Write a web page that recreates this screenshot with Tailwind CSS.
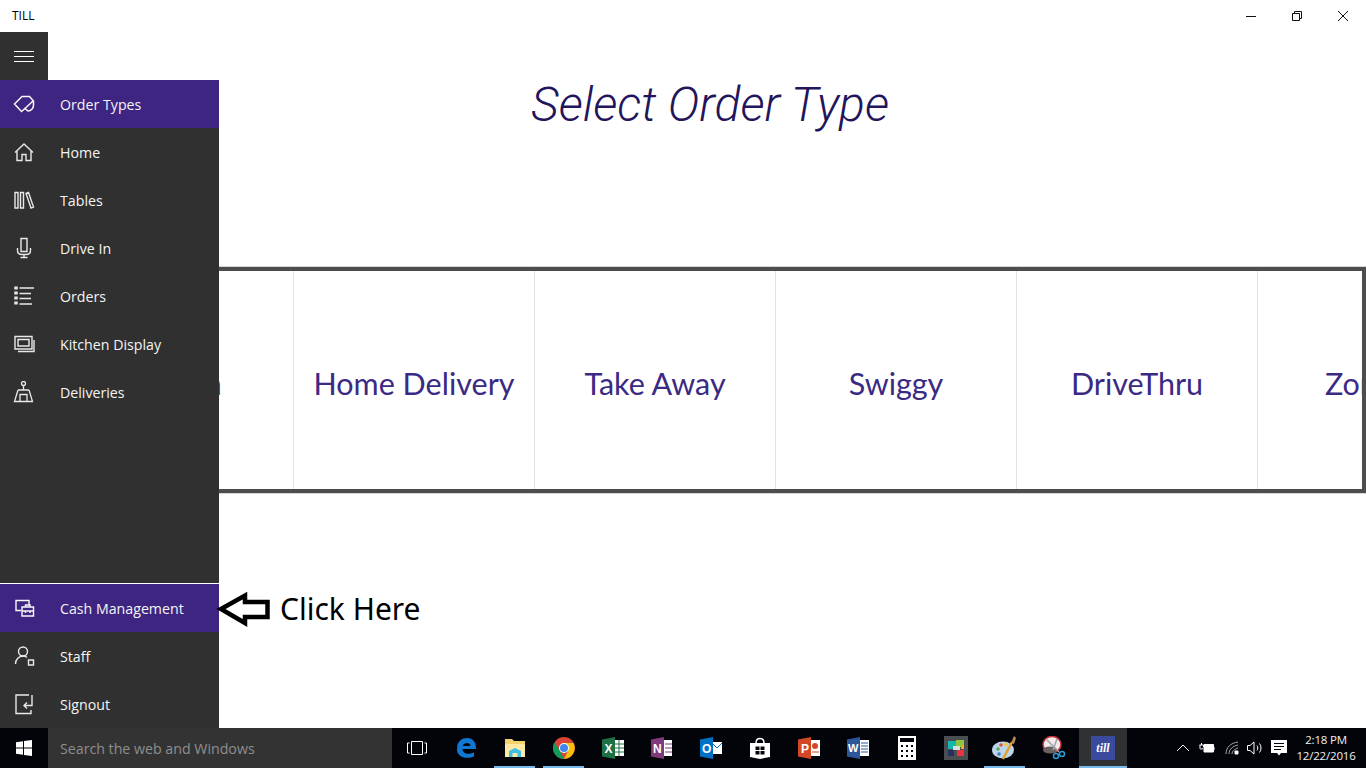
<!doctype html>
<html><head><meta charset="utf-8"><script src="https://cdn.jsdelivr.net/npm/@tailwindcss/browser@4"></script></head>
<body class="m-0 bg-white">
<div class="relative flex flex-col w-[1366px] h-[768px] overflow-hidden bg-white font-['Open_Sans',sans-serif]">
  <!-- title bar -->
  <div class="flex h-8 shrink-0 items-center justify-between">
    <span class="pl-3 text-[12px] text-black">TILL</span>
    <div class="flex">
      <div class="w-[46px] h-8 flex items-center justify-center"><svg width="12" height="12" viewBox="0 0 12 12"><path d="M1 6.5H11" stroke="#111" fill="none"/></svg></div>
      <div class="w-[46px] h-8 flex items-center justify-center"><svg width="12" height="12" viewBox="0 0 12 12" fill="none" stroke="#111"><path d="M1.5 3.5H8.5V10.5H1.5ZM3.5 3.5V1.5H10.5V8.5H8.5"/></svg></div>
      <div class="w-[46px] h-8 flex items-center justify-center"><svg width="12" height="12" viewBox="0 0 12 12" fill="none" stroke="#111"><path d="M1 1L11 11M11 1L1 11"/></svg></div>
    </div>
  </div>
  <!-- main -->
  <div class="relative flex-1 min-h-0">
    <div class="pl-12 flex flex-col">
      <div class="h-[145px] pl-[6px] flex items-center justify-center">
        <h1 class="font-['Roboto',sans-serif] italic font-light text-[48px] leading-none text-[#23155c]">Select Order Type</h1>
      </div>
      <div class="mt-[90px] h-[226px] border-4 border-[#4d4d4d] ring-1 ring-[#d4d4d4] flex overflow-hidden font-['Lato',sans-serif] text-[30.5px] text-[#3b2a84]">
        <div class="w-[242px] pl-[2px] pt-2 shrink-0 border-r border-[#e2e2e2] flex items-center justify-center">Dine In</div>
        <div class="w-[241px] pt-2 shrink-0 border-r border-[#e2e2e2] flex items-center justify-center">Home Delivery</div>
        <div class="w-[241px] pt-2 shrink-0 border-r border-[#e2e2e2] flex items-center justify-center">Take Away</div>
        <div class="w-[241px] pt-2 shrink-0 border-r border-[#e2e2e2] flex items-center justify-center">Swiggy</div>
        <div class="w-[241px] pt-2 shrink-0 border-r border-[#e2e2e2] flex items-center justify-center">DriveThru</div>
        <div class="w-[241px] pt-2 pr-1 shrink-0 flex items-center justify-center">Zomato</div>
      </div>
    </div>
    <!-- nav pane -->
    <div class="absolute left-0 top-0 bottom-0 w-[219px] flex flex-col text-[14.2px] text-[#f4f4f4]">
      <div class="w-12 h-12 shrink-0 bg-[#303030] flex items-center justify-center">
        <svg class="mt-[2px]" width="20" height="12" viewBox="0 0 20 12" stroke="#fff" fill="none"><path d="M0 .5H20M0 5.5H20M0 10.5H20"/></svg>
      </div>
      <div class="flex-1 bg-[#303030] flex flex-col border-b border-white">
        <a class="flex h-12 items-center bg-[#3d2581]"><span class="w-12 flex justify-center"><svg width="22" height="22" viewBox="0 0 22 22" fill="none" stroke="#f8f8f8" stroke-width="1.5"><path d="M1.500 11L9 3.500H16.500L20.500 8V12C20.500 15.500 18 18 15 18L12 15.500L8.500 18.500Z"/><path d="M12 15.500L20 8"/></svg></span><span class="ml-3 pt-[2px]">Order Types</span></a>
        <a class="flex h-12 items-center"><span class="w-12 flex justify-center"><svg width="22" height="22" viewBox="0 0 22 22" fill="none" stroke="#e8e8e8" stroke-width="1.4"><path d="M2 11.500L11 3L20 11.500M4 9.500V19.500H9V13.500H13V19.500H18V9.500"/></svg></span><span class="ml-3 pt-[2px]">Home</span></a>
        <a class="flex h-12 items-center"><span class="w-12 flex justify-center"><svg width="22" height="22" viewBox="0 0 22 22" fill="none" stroke="#e8e8e8" stroke-width="1.4"><path d="M2 3.500H5V19H2ZM7.500 3.500H10.500V19H7.500ZM13 4.500L15.500 3.500L20.500 18L18 19Z"/></svg></span><span class="ml-3 pt-[2px]">Tables</span></a>
        <a class="flex h-12 items-center"><span class="w-12 flex justify-center"><svg width="22" height="22" viewBox="0 0 22 22" fill="none" stroke="#e8e8e8" stroke-width="1.4"><path d="M8 1.500H14V14.500H8ZM4.500 11V13.500C4.500 16 6.500 17.500 9 17.500H13C15.500 17.500 17.500 16 17.500 13.500V11M11 17.500V20M7.500 20.500H14.500"/></svg></span><span class="ml-3 pt-[2px]">Drive In</span></a>
        <a class="flex h-12 items-center"><span class="w-12 flex justify-center"><svg width="22" height="22" viewBox="0 0 22 22" fill="none" stroke="#e8e8e8" stroke-width="1.3"><path d="M6.500 3H21M6.500 8.500H18M6.500 13.500H18M6.500 19H19"/><path stroke-width="3.500" d="M3 1.500V4.500M3 6.500V9.500M3 11.500V14.500M3 16.500V19.500"/></svg></span><span class="ml-3 pt-[2px]">Orders</span></a>
        <a class="flex h-12 items-center"><span class="w-12 flex justify-center"><svg width="22" height="22" viewBox="0 0 22 22" fill="none" stroke="#e8e8e8" stroke-width="1.4"><path d="M2 3.500H19V16H2ZM5 6.500H16V13H5ZM21 7V18.500H5"/></svg></span><span class="ml-3 pt-[2px]">Kitchen Display</span></a>
        <a class="flex h-12 items-center"><span class="w-12 flex justify-center"><svg width="22" height="22" viewBox="0 0 22 22" fill="none" stroke="#e8e8e8" stroke-width="1.3"><circle cx="10.500" cy="2.500" r="2"/><path d="M10.500 4.500V9M5 9H16M5 9L1.500 20.500H19.500L16 9M7 20V13.500H14V20"/></svg></span><span class="ml-3 pt-[2px]">Deliveries</span></a>
      </div>
      <div class="bg-[#303030] flex flex-col shrink-0">
        <a class="flex h-12 items-center bg-[#3d2581]"><span class="w-12 flex justify-center"><svg width="22" height="22" viewBox="0 0 22 22" fill="none" stroke="#f8f8f8" stroke-width="1.4"><path d="M8 13.500H3V3.500H16V8"/><path d="M9 10H20.500V19H9ZM9 14H20.500M12.500 14V16M17 14V16M12.500 10V8H17V10"/></svg></span><span class="ml-3 pt-[2px]">Cash Management</span></a>
        <a class="flex h-12 items-center"><span class="w-12 flex justify-center"><svg width="22" height="22" viewBox="0 0 22 22" fill="none" stroke="#e8e8e8" stroke-width="1.4"><circle cx="10" cy="6.500" r="4.500"/><path d="M2.500 19C2.500 14.500 6 11 10 11C11.500 11 13 11.500 14 12.500"/><path d="M15.500 15H20.500V20H15.500Z"/></svg></span><span class="ml-3 pt-[2px]">Staff</span></a>
        <a class="flex h-12 items-center"><span class="w-12 flex justify-center"><svg width="22" height="22" viewBox="0 0 22 22" fill="none" stroke="#e8e8e8" stroke-width="1.4"><path d="M16 2H3V20.500H18V17M19 2V12.500H11M14 9.500L11 12.500L14 15.500"/></svg></span><span class="ml-3 pt-[2px]">Signout</span></a>
      </div>
    </div>
    <!-- annotation -->
    <svg class="absolute left-[215px] top-[558px]" width="60" height="40" viewBox="0 0 60 40" fill="#fff" stroke="#000" stroke-width="4.500"><path d="M6 19L30 5.500V12H52.500V27H30V33Z"/></svg>
    <span class="absolute left-[280px] top-[555px] font-['Noto_Sans',sans-serif] text-[30px] leading-[44px] text-black">Click Here</span>
  </div>
  <!-- taskbar -->
  <div class="flex h-10 shrink-0 bg-[#03040a]">
    <div class="w-12 flex items-center justify-center"><svg width="16" height="16" viewBox="0 0 16 16" fill="#fff"><path d="M0 2.300L7 1.300V7.500H0ZM8 1.100L16 0V7.500H8ZM0 8.500H7V14.700L0 13.700ZM8 8.500H16V16L8 14.900Z"/></svg></div>
    <div class="w-[344px] pt-[2px] bg-[#333333] flex items-center pl-3 text-[14.200px] text-[#8e8e8e]">Search the web and Windows</div>
    <div class="flex">
      <div class="w-[49px] flex items-center justify-center"><svg width="20" height="14" viewBox="0 0 20 14" fill="none" stroke="#fff"><path d="M4.500 .5H15.500V13.500H4.500ZM2.500 2H.5V12H2.500M17.500 2H19.500V12H17.500"/></svg></div>
      <div class="w-[49px] flex items-center justify-center"><svg width="22" height="22" viewBox="0 0 22 22"><path fill="#0f78d4" d="M2 10C3 4 7 1 12 1C18 1 21 5 21 12H7.500C7.500 16 12 18.500 19 15.500V19.500C12 22.500 2 20.500 2 12.500C2 8 5 5.500 8 4C5.500 6 4 8 2 10ZM7.800 9H15.500C15.500 5 8.500 5 7.800 9Z"/></svg></div>
      <div class="relative w-[49px] flex items-center justify-center"><svg width="22" height="22" viewBox="0 0 22 22"><path fill="#f3d36b" d="M1 2H8L10 4H21V20H1Z"/><path fill="#fbe9a4" d="M1 7H21V20H1Z"/><path fill="#3dbfe6" d="M5 20V14L11 11L17 14V20H13.500V16H8.500V20Z"/></svg><i class="absolute left-1 right-1 bottom-0 h-0.5 bg-[#76b9ed]"></i></div>
      <div class="relative w-[49px] flex items-center justify-center"><svg width="22" height="22" viewBox="0 0 22 22"><circle cx="11" cy="11" r="11" fill="#db4437"/><path fill="#0f9d58" d="M11 22A11 11 0 0 1 1.500 5.500L7 14L11 22Z"/><path fill="#f4c20d" d="M11 6H20.500A11 11 0 0 1 11 22L15 14Z"/><circle cx="11" cy="11" r="5" fill="#fff"/><circle cx="11" cy="11" r="4" fill="#4285f4"/></svg><i class="absolute left-1 right-1 bottom-0 h-0.5 bg-[#76b9ed]"></i></div>
      <div class="w-[49px] flex items-center justify-center"><svg width="22" height="22" viewBox="0 0 22 22"><path fill="#fff" d="M12 3H22V19H12Z"/><path stroke="#1e7145" d="M12 7H22M12 11H22M12 15H22M17 3V19" fill="none"/><path fill="#1e7145" d="M0 2.500L13 0V22L0 19.500Z"/><text x="2.500" y="15.500" font-family="Liberation Sans" font-weight="700" font-size="12" fill="#fff">X</text></svg></div>
      <div class="w-[49px] flex items-center justify-center"><svg width="22" height="22" viewBox="0 0 22 22"><path fill="#fff" d="M12 3H21V19H12Z"/><path stroke="#80397b" d="M14 7H21M14 11H21M14 15H21" fill="none"/><path fill="#80397b" d="M0 2.500L13 0V22L0 19.500Z"/><text x="2" y="15.500" font-family="Liberation Sans" font-weight="700" font-size="12" fill="#fff">N</text></svg></div>
      <div class="w-[49px] flex items-center justify-center"><svg width="22" height="22" viewBox="0 0 22 22"><path fill="#fff" d="M12 5H22V17H12Z"/><path stroke="#0072c6" d="M12 6L17 11L22 6" fill="none"/><path fill="#0072c6" d="M0 2.500L13 0V22L0 19.500Z"/><text x="2" y="15.500" font-family="Liberation Sans" font-weight="700" font-size="12" fill="#fff">O</text></svg></div>
      <div class="w-[49px] flex items-center justify-center"><svg width="22" height="24" viewBox="0 0 22 24"><path fill="none" stroke="#fff" stroke-width="1.500" d="M7 7C7 1 15 1 15 7"/><path fill="#fff" d="M1 7H21V21L11 23L1 21Z"/><path fill="#03040a" d="M6.500 10.500H10.500V14H6.500ZM11.500 10.500H15.500V14H11.500ZM6.500 15H10.500V18.500H6.500ZM11.500 15H15.500V18.500H11.500Z"/></svg></div>
      <div class="w-[49px] flex items-center justify-center"><svg width="22" height="22" viewBox="0 0 22 22"><path fill="#fff" d="M12 3H22V19H12Z"/><circle cx="17" cy="9" r="3" fill="#d24726"/><path stroke="#d24726" d="M14 15H21" fill="none"/><path fill="#d24726" d="M0 2.500L13 0V22L0 19.500Z"/><text x="3" y="15.500" font-family="Liberation Sans" font-weight="700" font-size="12" fill="#fff">P</text></svg></div>
      <div class="w-[49px] flex items-center justify-center"><svg width="22" height="22" viewBox="0 0 22 22"><path fill="#fff" d="M12 3H22V19H12Z"/><path stroke="#2b579a" d="M14 6H21M14 9H21M14 12H21M14 15H21" fill="none"/><path fill="#2b579a" d="M0 2.500L13 0V22L0 19.500Z"/><text x="1" y="15" font-family="Liberation Sans" font-weight="700" font-size="11" fill="#fff">W</text></svg></div>
      <div class="w-[49px] flex items-center justify-center"><svg width="18" height="24" viewBox="0 0 18 24"><path fill="#fff" d="M0 0H18V24H0Z"/><path fill="#03040a" d="M2 2H16V6H2ZM3 9H5V11H3ZM8 9H10V11H8ZM13 9H15V11H13ZM3 14H5V16H3ZM8 14H10V16H8ZM13 14H15V16H13ZM3 19H5V21H3ZM8 19H10V21H8ZM13 19H15V21H13Z"/></svg></div>
      <div class="w-[49px] flex items-center justify-center"><svg width="24" height="24" viewBox="0 0 24 24"><path fill="#4a4e50" d="M0 0H24V24H0Z"/><path fill="#16b6b0" d="M4 5H12V13H4Z"/><path fill="#8cc63f" d="M12 4H20V11H12Z"/><path fill="#e8333f" d="M13 14H20V20H13Z"/><path fill="#f7a81b" d="M17 9H20V13H17Z"/><path fill="#25305e" d="M4 14H10V20H4Z"/><path fill="#ddd" d="M9 10H16V14H9Z"/></svg></div>
      <div class="relative w-[49px] flex items-center justify-center"><svg width="26" height="26" viewBox="0 0 26 26"><ellipse cx="11" cy="15" rx="11" ry="8.500" fill="#bcd5e8"/><circle cx="6" cy="14" r="1.800" fill="#5aa95a"/><circle cx="9" cy="10" r="1.800" fill="#e0533f"/><circle cx="14" cy="9.500" r="1.800" fill="#f2c230"/><circle cx="7" cy="19" r="1.800" fill="#3a7fc4"/><path d="M11 24L20 7" stroke="#e0a030" stroke-width="2.500"/><path d="M19 8L22 1L24 3L22 9Z" fill="#b98a55"/></svg><i class="absolute left-1 right-1 bottom-0 h-0.5 bg-[#76b9ed]"></i></div>
      <div class="w-[49px] flex items-center justify-center"><svg width="24" height="24" viewBox="0 0 24 24"><ellipse cx="10" cy="8.500" rx="9" ry="8" fill="#f5e9e9" stroke="#c0333b" stroke-width="1.500"/><ellipse cx="8" cy="14" rx="7" ry="3.500" fill="#6a6262"/><path d="M5 4L17 16M15 3L11 14" stroke="#9aa4aa" stroke-width="1.500"/><circle cx="20" cy="18" r="2.500" fill="none" stroke="#2e9bd6" stroke-width="1.500"/><circle cx="14" cy="20" r="2.500" fill="none" stroke="#2e9bd6" stroke-width="1.500"/></svg></div>
      <div class="relative ml-[1px] w-[48px] bg-[#2f3133] flex items-center justify-center"><div class="w-6 h-6 bg-[#3a4a9c] flex items-center justify-center font-['Liberation_Serif',serif] italic font-bold text-[12px] text-white">till</div><i class="absolute left-0 right-0 bottom-0 h-0.5 bg-[#76b9ed]"></i></div>
    </div>
    <div class="flex-1 flex items-center pl-[50px] text-white">
      <svg class="w-3 h-3" viewBox="0 0 12 12" fill="none" stroke="#eee"><path d="M0 9L6 3L12 9"/></svg>
      <svg class="ml-[10px] w-[16px] h-[12px]" viewBox="0 0 16 12" fill="none" stroke="#fff"><path fill="#fff" d="M5 2.500H14.500V10H5Z"/><path d="M15 5V8"/><path d="M1 3V6.500C1 7 2 7.500 4 6.500M2.500 1V3M.5 3H4.500V5"/></svg>
      <svg class="ml-[9px] w-[16px] h-[14px]" viewBox="0 0 16 14" fill="none" stroke="#aaa"><path d="M2 13C2 6 7 2 14 1M5 13C5 8 9 5 14 4M8 13C8 10 11 8 14 7"/><path d="M11 10H14V13H11Z" fill="#fff" stroke="#fff"/></svg>
      <svg class="ml-[7px] w-[16px] h-[14px]" viewBox="0 0 16 14" fill="none" stroke="#fff"><path d="M.5 4.500H3L7 1V13L3 9.500H.5ZM10 4.500C11 6 11 8 10 9.500M12.500 2.500C14.500 5 14.500 9 12.500 11.500"/></svg>
      <svg class="ml-[8px] w-[16px] h-[16px]" viewBox="0 0 16 16"><path fill="#fff" d="M0 0H16V13H10L8 15.500L6 13H0Z"/><path stroke="#03040a" d="M3 3.500H13M3 6.500H13M3 9.500H10" fill="none"/></svg>
      <div class="ml-[9px] w-[60px] flex flex-col items-center text-[11.500px] leading-[16px] text-[#f0f0f0] tracking-[-0.2px]"><span>2:18 PM</span><span>12/22/2016</span></div>
    </div>
  </div>
</div>
</body></html>
